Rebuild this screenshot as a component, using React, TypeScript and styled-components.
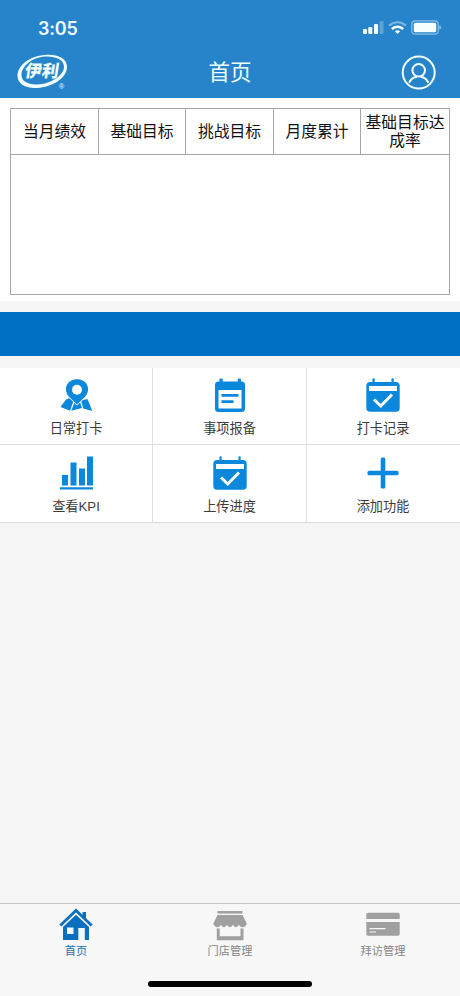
import React from "react";
import styled, { createGlobalStyle } from "styled-components";

const GlobalStyle = createGlobalStyle`
  * { box-sizing: border-box; }
  body { margin: 0; background: #f5f5f5; }
  svg { display: block; }
`;

const Screen = styled.div`
  width: 460px;
  height: 996px;
  display: flex;
  flex-direction: column;
  background: #f5f5f5;
  font-family: "Liberation Sans", "Noto Sans CJK SC", sans-serif;
  overflow: hidden;
`;

const Header = styled.header`
  height: 98px;
  background: #2784cb;
  color: #f0ffff;
`;

const StatusBar = styled.div`
  height: 46px;
  padding: 11px 18px 0 38px;
  display: flex;
  justify-content: space-between;
`;

const Clock = styled.span`
  font: 600 18px/35px Inter, sans-serif;
  letter-spacing: -0.2px;
`;

const NavBar = styled.div`
  height: 52px;
  display: grid;
  grid-template-columns: 80px 1fr 80px;
`;

const LogoSlot = styled.div`
  padding: 7px 0 0 16px;
`;

const UserSlot = styled.div`
  padding: 8px 0 0 21px;
`;

const Title = styled.h1`
  margin: 0;
  font-size: 21.5px;
  font-weight: 400;
  line-height: 55px;
  text-align: center;
`;

const Panel = styled.section`
  height: 203px;
  padding: 10px 10px 6px;
  background: #fff;
`;

const Table = styled.div`
  height: 187px;
  border: 1px solid #a6a6a6;
`;

const TableHead = styled.div`
  height: 46px;
  display: grid;
  grid-template-columns: 88px 87px 88px 87px 1fr;
  border-bottom: 1px solid #a6a6a6;
`;

const HeadCell = styled.div`
  display: flex;
  align-items: center;
  justify-content: center;
  padding: 0 3px;
  border-right: 1px solid #a6a6a6;
  color: #111;
  font-size: 15.8px;
  line-height: 18px;
  text-align: center;
  word-break: break-all;
  &:last-child { border-right: 0; }
`;

const Banner = styled.div`
  height: 44px;
  margin: 11px 0 12px;
  background: #0070c4;
`;

const Menu = styled.section`
  display: grid;
  grid-template-columns: 153px 154px 153px;
  grid-template-rows: 77px 78px;
`;

const MenuItem = styled.div`
  display: flex;
  flex-direction: column;
  align-items: center;
  padding-top: 9px;
  background: #fff;
  border-right: 1px solid #e2e2e2;
  border-bottom: 1px solid #dcdcdc;
  color: #0b88dc;
  &:nth-child(3n) {
    padding-right: 1px;
    border-right: 0;
  }
  &:nth-child(n + 4) { padding-top: 10px; }
`;

const MenuLabel = styled.span`
  margin-top: 6px;
  color: #3c3c3c;
  font-size: 13.2px;
  line-height: 20px;
`;

const Spacer = styled.div`
  flex: 1;
`;

const TabBar = styled.nav`
  height: 93px;
  display: flex;
  flex-direction: column;
  justify-content: space-between;
  align-items: center;
  border-top: 1px solid #c6c6c6;
  background: #f7f7f7;
`;

const Tabs = styled.div`
  width: 100%;
  display: grid;
  grid-template-columns: 152px 156px 150px;
`;

const Tab = styled.div<{ $active?: boolean }>`
  display: flex;
  flex-direction: column;
  align-items: center;
  padding-top: 3px;
  color: ${(p) => (p.$active ? "#0a6fbd" : "#a0a0a0")};
`;

const TabLabel = styled.span<{ $active?: boolean }>`
  color: ${(p) => (p.$active ? "#1b6cae" : "#868686")};
  font-size: 11.2px;
  line-height: 16px;
`;

const HomeIndicator = styled.div`
  width: 164px;
  height: 6px;
  margin-bottom: 9px;
  border-radius: 3px;
  background: #000;
`;

const BrandLogo = () => (
  <svg width="52" height="38" viewBox="0 0 52 38" fill="none">
    <path
      fill="#f0ffff"
      fillRule="evenodd"
      d="M29 2 C41 1 51 5 51 14 C51 25 36 35 19 35 C8 35 1.500 30 1.500 23 C1.500 12 14 3 29 2 Z M29 3.600 C16 4.500 6 13 5.500 21.500 C5 28 12 31.800 21 31.500 C35 31 48 22.500 48 13.800 C48 6.500 39 3 29 3.600 Z"
    />
    <text
      x="8"
      y="24.500"
      fill="#f0ffff"
      fontFamily="Noto Sans CJK SC, sans-serif"
      fontSize="17"
      fontWeight="900"
      transform="translate(4 0) skewX(-9)"
    >
      伊利
    </text>
    <text x="43" y="36" fill="#f0ffff" fontFamily="Liberation Sans, sans-serif" fontSize="7">
      ®
    </text>
  </svg>
);

const StatusIcons = () => (
  <svg width="80" height="34" viewBox="362 11 80 34">
    <g fill="#f4ffff">
      <rect x="363" y="29" width="4" height="5" rx="1" />
      <rect x="368.300" y="27" width="4" height="7" rx="1" />
      <rect x="374" y="24" width="4" height="10" rx="1" />
      <rect x="379.500" y="21" width="4" height="13" rx="1" opacity=".25" />
      <path d="M397.500 34 L394.900 31.300 Q397.500 29.300 400.100 31.300 Z" />
    </g>
    <path d="M391.800 29 Q397.500 24.600 403.200 29" fill="none" stroke="#f4ffff" strokeWidth="2.500" />
    <path d="M389 25.500 Q397.500 18.800 406 25.500" fill="none" stroke="#f4ffff" strokeWidth="2.300" opacity=".4" />
    <rect x="411.800" y="20.800" width="26.400" height="13.400" rx="3.500" fill="none" stroke="#f4ffff" strokeWidth="1.200" opacity=".5" />
    <rect x="413.800" y="22.800" width="22.400" height="9.400" rx="1.500" fill="#f4ffff" />
    <path d="M439.300 25.300 q1.800 .6 1.800 2.200 t-1.800 2.200z" fill="#f4ffff" opacity=".5" />
  </svg>
);

const UserIcon = () => (
  <svg width="36" height="36" viewBox="0 0 36 36" fill="none" stroke="#f0ffff" strokeWidth="2">
    <circle cx="17.700" cy="18.600" r="16" />
    <circle cx="17.700" cy="16.300" r="6.300" />
    <path d="M8.500 28 Q11 23.500 15 23 M20.400 23 Q24.500 23.500 27 28" strokeLinecap="round" />
  </svg>
);

const Icon = ({ children }: { children: React.ReactNode }) => (
  <svg width="36" height="36" viewBox="0 0 36 36" fill="currentColor">
    {children}
  </svg>
);

const PinIcon = () => (
  <Icon>
    <path d="M8 22.500 L2.500 30 L12 33.800 L15.500 24 L11.500 21 Z" />
    <path d="M16.600 25 L13.300 33.800 L24 31 L22 25 Z" />
    <path d="M23 23.500 L29.500 22 L34.300 34 L25.300 31.500 Z" />
    <path
      stroke="#fff"
      strokeWidth="1.400"
      paintOrder="stroke"
      d="M19 27.500 L10.700 19.500 C4.500 11.500 9.500 2.300 19 2.300 C28.500 2.300 33.500 11.500 27.300 19.500 Z"
    />
    <circle cx="19" cy="12.800" r="5" fill="#fff" />
  </Icon>
);

const NoteIcon = () => (
  <Icon>
    <rect x="7.500" y="1.500" width="3.200" height="8" rx="1" />
    <rect x="25.800" y="1.500" width="3.200" height="8" rx="1" />
    <rect x="3" y="4.500" width="30" height="30.500" rx="3.500" />
    <path fill="#fff" d="M6.500 13 H29.500 V31.500 H6.500 Z" />
    <path d="M9.500 17 H26.500 V19.700 H9.500 Z M9.500 23.300 H21.500 V26 H9.500 Z" />
  </Icon>
);

const CheckCalendarIcon = () => (
  <Icon>
    <rect x="7.500" y="1.300" width="2.200" height="6" rx="1" />
    <rect x="26.500" y="1.300" width="2.200" height="6" rx="1" />
    <rect x="1.300" y="5" width="33.400" height="29.800" rx="3.800" />
    <path fill="#fff" d="M4 9 H32 V14 H4 Z" />
    <path d="M9 22.500 L15.800 29 L27 17.500" fill="none" stroke="#fff" strokeWidth="3" />
  </Icon>
);

const ChartIcon = () => (
  <Icon>
    <path d="M4 20 H10 V30.500 H4 Z M12.500 7.500 H18.500 V30.500 H12.500 Z M21 13.500 H27 V30.500 H21 Z M29 1.500 H35 V30.500 H29 Z M2 32.300 H35 V34.500 H2 Z" />
  </Icon>
);

const PlusIcon = () => (
  <Icon>
    <rect x="2.500" y="15.700" width="31" height="4.600" rx="1.500" />
    <rect x="15.700" y="2.500" width="4.600" height="31" rx="1.500" />
  </Icon>
);

const HomeIcon = () => (
  <Icon>
    <path d="M24.500 5 H28 V13 L24.500 9.500 Z" />
    <path d="M2.300 18.500 L18 3.500 L33.700 18.500" fill="none" stroke="currentColor" strokeWidth="2.800" />
    <path
      fillRule="evenodd"
      d="M18 7.800 L31 20 V33 H26.800 V21 H20.300 V33 H5 V20 Z M9 20.500 V27 H15.500 V20.500 Z"
    />
  </Icon>
);

const ShopIcon = () => (
  <Icon>
    <rect x="5.500" y="4" width="25" height="2.600" />
    <path d="M5.500 8 H30.500 L34.800 16.500 Q33.500 20.500 30.300 20.200 Q27.500 20 27 17.800 Q25.500 20.200 24 20.200 Q21.800 20.200 21 17.800 Q19.500 20.200 18 20.200 Q16 20.200 15 17.800 Q13.500 20.200 12 20.200 Q9.800 20.200 9 17.800 Q7.800 20.200 5.800 20.200 Q2.500 20 1.300 16.500 Z" />
    <path d="M4.800 21.500 H7.700 V29.300 H28.500 V21.500 H31.500 V33.200 H4.800 Z" />
  </Icon>
);

const CardIcon = () => (
  <Icon>
    <path d="M3 5.700 H33 Q34.700 5.700 34.700 7.500 V12 H1.300 V7.500 Q1.300 5.700 3 5.700 Z" />
    <path d="M1.300 15 H34.700 V27 Q34.700 28.800 33 28.800 H3 Q1.300 28.800 1.300 27 Z" />
    <path d="M4.500 21.700 H20.500 M4.500 25 H11" stroke="#f7f7f7" strokeWidth="1.200" />
  </Icon>
);

const columns = ["当月绩效", "基础目标", "挑战目标", "月度累计", "基础目标达成率"];

const menuItems = [
  { label: "日常打卡", Glyph: PinIcon },
  { label: "事项报备", Glyph: NoteIcon },
  { label: "打卡记录", Glyph: CheckCalendarIcon },
  { label: "查看KPI", Glyph: ChartIcon },
  { label: "上传进度", Glyph: CheckCalendarIcon },
  { label: "添加功能", Glyph: PlusIcon },
];

const tabs = [
  { label: "首页", Glyph: HomeIcon, active: true },
  { label: "门店管理", Glyph: ShopIcon, active: false },
  { label: "拜访管理", Glyph: CardIcon, active: false },
];

export default function App() {
  return (
    <Screen>
      <GlobalStyle />
      <Header>
        <StatusBar>
          <Clock>3:05</Clock>
          <StatusIcons />
        </StatusBar>
        <NavBar>
          <LogoSlot>
            <BrandLogo />
          </LogoSlot>
          <Title>首页</Title>
          <UserSlot>
            <UserIcon />
          </UserSlot>
        </NavBar>
      </Header>
      <Panel>
        <Table>
          <TableHead>
            {columns.map((name) => (
              <HeadCell key={name}>{name}</HeadCell>
            ))}
          </TableHead>
        </Table>
      </Panel>
      <Banner />
      <Menu>
        {menuItems.map(({ label, Glyph }) => (
          <MenuItem key={label}>
            <Glyph />
            <MenuLabel>{label}</MenuLabel>
          </MenuItem>
        ))}
      </Menu>
      <Spacer />
      <TabBar>
        <Tabs>
          {tabs.map(({ label, Glyph, active }) => (
            <Tab key={label} $active={active}>
              <Glyph />
              <TabLabel $active={active}>{label}</TabLabel>
            </Tab>
          ))}
        </Tabs>
        <HomeIndicator />
      </TabBar>
    </Screen>
  );
}
